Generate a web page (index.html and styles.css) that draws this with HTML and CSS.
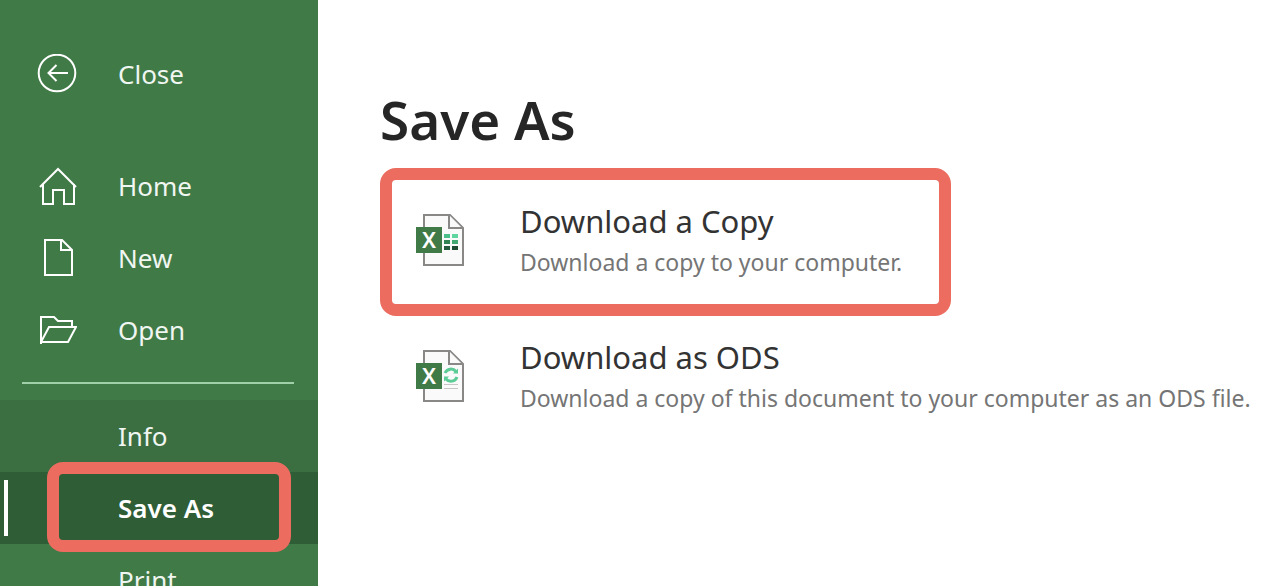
FILE: index.html
```html
<!DOCTYPE html>
<html lang="en">
<head>
  <meta charset="UTF-8">
  <title>Save As</title>
  <meta name="viewport" content="width=device-width, initial-scale=1.0">
  <link rel="stylesheet" href="styles.css">
</head>
<body>

<nav class="sidebar">
  <button type="button" class="nav-item nav-close">
    <svg class="nav-icon" viewBox="0 0 40 40"><circle cx="20" cy="19" r="18.3"/><path d="M31 19H11.500M19.500 11L11.500 19l8 8"/></svg>
    <span>Close</span>
  </button>
  <button type="button" class="nav-item">
    <svg class="nav-icon" viewBox="0 0 40 40"><path d="M3 21L21 3l18 18M6 18v20h10V24h11v14h10V18"/></svg>
    <span>Home</span>
  </button>
  <button type="button" class="nav-item">
    <svg class="nav-icon" viewBox="0 0 40 40"><path d="M8 2h17l10 10v25H8zM24 2v10h11"/></svg>
    <span>New</span>
  </button>
  <button type="button" class="nav-item">
    <svg class="nav-icon" viewBox="0 0 40 40"><path d="M4 34V7h13l4 4h14v6M4 32L12 17h27l-8 15H4"/></svg>
    <span>Open</span>
  </button>
  <hr class="divider">
  <button type="button" class="nav-item nav-sub hover">Info</button>
  <button type="button" class="nav-item nav-sub active">Save As</button>
  <button type="button" class="nav-item nav-sub">Print</button>
</nav>

<main class="content">
  <h1>Save As</h1>

  <button type="button" class="option marked">
    <svg class="file-icon" viewBox="0 0 52 56">
      <path class="page" d="M10 3h26l13 13v37H10z"/>
      <path class="page" d="M35 3v13h13"/>
      <path fill="#4cc08a" d="M30 22h6v4h-6z"/><path fill="#5fd6a0" d="M38 22h6v4h-6z"/>
      <path fill="#338455" d="M30 28h6v4h-6z"/><path fill="#43a873" d="M38 28h6v4h-6z"/>
      <path fill="#285c40" d="M30 34h6v4h-6z"/><path fill="#1f4a34" d="M38 34h6v4h-6z"/>
      <path class="tile" d="M2 15h26v26H2z"/>
      <text class="tile-letter" x="15" y="36">X</text>
    </svg>
    <span class="option-text">
      <span class="option-title">Download a Copy</span>
      <span class="option-desc">Download a copy to your computer.</span>
    </span>
  </button>

  <button type="button" class="option">
    <svg class="file-icon" viewBox="0 0 52 56">
      <path class="page" d="M10 3h26l13 13v37H10z"/>
      <path class="page" d="M35 3v13h13"/>
      <path class="arrows" d="M31 25a6.500 6.500 0 0 1 11-1.500M43 29a6.500 6.500 0 0 1-11 2"/>
      <path fill="#5ccb96" d="M39 25.500h5v-5zM30 28.500h5l-5 5z"/>
      <path class="lines" d="M30 36.500h14M30 40.500h14"/>
      <path class="tile" d="M2 15h26v26H2z"/>
      <text class="tile-letter" x="15" y="36">X</text>
    </svg>
    <span class="option-text">
      <span class="option-title">Download as ODS</span>
      <span class="option-desc">Download a copy of this document to your computer as an ODS file.</span>
    </span>
  </button>
</main>

</body>
</html>
```
FILE: styles.css
```css
*, *::before, *::after { box-sizing: border-box; }
body {
  display: flex; height: 100vh; margin: 0; overflow: hidden;
  background: #fff; color: #262626; font-family: "Segoe UI", "Noto Sans", sans-serif;
}
button { border: none; background: none; font-family: inherit; text-align: left; cursor: pointer; }

.sidebar { flex: 0 0 318px; padding-top: 38px; overflow: hidden; background: #407a47; }
.nav-item {
  position: relative; display: flex; align-items: center; gap: 41px;
  width: 100%; height: 72px; padding: 0 37px; color: #f0f6f1; font-size: 26px;
}
.nav-close { margin-bottom: 40px; }
.nav-icon { width: 40px; height: 40px; fill: none; stroke: #fff; stroke-width: 2; }
.divider { height: 2px; margin: 16px 24px 16px 22px; border: none; background: #a0d0a8; }
.nav-sub { padding-left: 118px; }
.hover { background: #3b6f41; }
.active { background: #2f5d36; color: #fff; font-weight: 600; }
.active::before {
  content: ""; position: absolute; left: 4px; top: 8px; bottom: 8px; width: 4px; background: #fff;
}

/* red marker frames */
.active::after, .marked::after {
  content: ""; position: absolute; z-index: 1; border: 12px solid #ec6c60; border-radius: 16px;
}
.active::after { left: 47px; right: 27px; top: -10px; bottom: -8px; }
.marked::after { left: 0; top: -4px; bottom: -8px; width: 571px; }

.content { flex: 1; min-width: 0; padding: 84px 0 0 62px; }
h1 { margin: 0 0 16px; font-size: 53px; font-weight: 600; line-height: 72px; }
.option {
  position: relative; display: flex; align-items: flex-start; gap: 54px;
  width: 100%; height: 136px; padding: 28px 0 0 34px; white-space: nowrap;
}
.option-title { display: block; color: #333; font-size: 31px; line-height: 42px; }
.option-desc { display: block; color: #757575; font-size: 23px; line-height: 40px; }
.file-icon { flex: none; width: 52px; height: 56px; margin-top: 12px; }
.page { fill: #fafafa; stroke: #8a8886; stroke-width: 2; }
.tile { fill: #407a47; }
.tile-letter { fill: #fff; font-size: 22px; font-weight: 600; text-anchor: middle; }
.arrows { fill: none; stroke: #5ccb96; stroke-width: 3; }
.lines { stroke: #c8c6c4; stroke-width: 1; }
```
